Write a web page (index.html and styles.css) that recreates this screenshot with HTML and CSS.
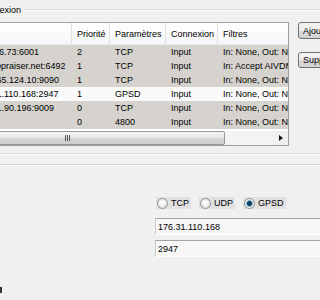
FILE: index.html
```html
<!DOCTYPE html>
<html lang="fr">
<head>
    <meta charset="UTF-8">
    <title>Connexions</title>
    <link rel="stylesheet" href="styles.css">
</head>
<body>
    <div class="group conn">
        <div class="group-title"><span>Connexion</span><span class="line"></span></div>
        <div class="group-body">
            <div class="list">
                <div class="list-view">
                    <table class="grid">
                        <colgroup>
                            <col class="c-name">
                            <col class="c-prio">
                            <col class="c-param">
                            <col class="c-conn">
                            <col class="c-filter">
                        </colgroup>
                        <thead>
                            <tr><th>Nom</th><th>Priorité</th><th>Paramètres</th><th>Connexion</th><th>Filtres</th></tr>
                        </thead>
                        <tbody>
                            <tr class="off"><td>5.39.46.73:6001</td><td>2</td><td>TCP</td><td>Input</td><td>In: None, Out: None</td></tr>
                            <tr class="off"><td>gps.appraiser.net:6492</td><td>1</td><td>TCP</td><td>Input</td><td>In: Accept AIVDM, Out: None</td></tr>
                            <tr class="off"><td>188.165.124.10:9090</td><td>1</td><td>TCP</td><td>Input</td><td>In: None, Out: None</td></tr>
                            <tr class="on"><td>176.31.110.168:2947</td><td>1</td><td>GPSD</td><td>Input</td><td>In: None, Out: None</td></tr>
                            <tr class="off"><td>91.121.90.196:9009</td><td>0</td><td>TCP</td><td>Input</td><td>In: None, Out: None</td></tr>
                            <tr class="off"><td>COM1</td><td>0</td><td>4800</td><td>Input</td><td>In: None, Out: None</td></tr>
                        </tbody>
                    </table>
                </div>
                <div class="hscroll">
                    <div class="sb-btn"></div>
                    <div class="sb-thumb"><span class="grip"></span></div>
                    <div class="sb-track"></div>
                    <div class="sb-btn"><span class="arrow-right"></span></div>
                </div>
            </div>
            <div class="buttons">
                <button type="button" class="btn">Ajouter</button>
                <button type="button" class="btn btn-del">Supprimer</button>
            </div>
        </div>
    </div>

    <div class="group params">
        <div class="form">
            <div class="radios">
                <label class="radio"><input type="radio" name="kind"> TCP</label>
                <label class="radio"><input type="radio" name="kind"> UDP</label>
                <label class="radio"><input type="radio" name="kind" checked> GPSD</label>
            </div>
            <input type="text" class="field" value="176.31.110.168">
            <input type="text" class="field" value="2947">
        </div>
        <div class="mark"></div>
    </div>
</body>
</html>
```

FILE: styles.css
```css
html, body {
    overflow: hidden;
}

body {
    margin: 0;
    width: 320px;
    height: 300px;
    background: #f0f0f0;
    font-family: "Liberation Sans", Arial, sans-serif;
    font-size: 9px;
    color: #000;
}

/* group boxes */
.conn {
    margin-left: -32px;
    width: 420px;
    padding-bottom: 7px;
    border-bottom: 1px solid #d5d5d5;
    box-shadow: 0 1px 0 #fff;
}

.group-title {
    display: flex;
    align-items: center;
    gap: 4px;
    height: 12px;
    margin-top: 4px;
    padding-left: 10px;
    line-height: 12px;
}

.group-title .line {
    flex: 1;
    border-top: 1px solid #d5d5d5;
    border-bottom: 1px solid #fff;
}

.group-body {
    display: flex;
    align-items: flex-start;
    margin-top: 6px;
}

/* list view */
.list {
    width: 321px;
    flex: none;
    box-sizing: border-box;
    border: 1px solid #a0a0a0;
    background: #fff;
}

.list-view {
    height: 107px;
    overflow: hidden;
}

.grid {
    table-layout: fixed;
    width: 400px;
    border-collapse: separate;
    border-spacing: 0;
}

.c-name { width: 103px; }
.c-prio { width: 38px; }
.c-param { width: 56px; }
.c-conn { width: 52px; }
.c-filter { width: 151px; }

.grid th {
    height: 21px;
    padding: 0 5px;
    text-align: left;
    font-weight: normal;
    white-space: nowrap;
    background: linear-gradient(#ffffff, #f6f7f9);
    border-bottom: 1px solid #eaeaea;
    box-shadow: inset -1px 0 0 #e2e2e2;
}

.grid td {
    height: 14px;
    padding: 0 5px;
    line-height: 14px;
    white-space: nowrap;
    overflow: hidden;
}

.grid tr.off td {
    background: #d6d3ce;
}

.grid tr.on td {
    background: #fafafa;
}

/* horizontal scrollbar */
.hscroll {
    display: flex;
    height: 15px;
    background: #f0f0f0;
    border-top: 1px solid #fff;
    box-sizing: border-box;
}

.sb-btn {
    width: 15px;
    display: flex;
    align-items: center;
    justify-content: center;
}

.sb-thumb {
    width: 241px;
    box-sizing: border-box;
    display: flex;
    align-items: center;
    border: 1px solid #979797;
    border-radius: 2px;
    background: linear-gradient(#f5f5f5, #e6e6e6 50%, #d4d4d4 51%, #cfcfcf);
}

.grip {
    margin-left: 80px;
    width: 5px;
    height: 6px;
    background: repeating-linear-gradient(90deg, #555 0 1px, transparent 1px 2px);
}

.sb-track {
    flex: 1;
    background: #f3f3f3;
}

.arrow-right {
    width: 0;
    height: 0;
    border-top: 3px solid transparent;
    border-bottom: 3px solid transparent;
    border-left: 4px solid #111;
}

/* side buttons */
.buttons {
    display: flex;
    flex-direction: column;
    align-items: flex-start;
    margin-left: 9px;
}

.btn {
    height: 17px;
    padding: 0 4px;
    font-family: inherit;
    font-size: 9px;
    color: #000;
    border: 1px solid #707070;
    border-radius: 3px;
    background: linear-gradient(#f4f4f4, #ececec 50%, #dcdcdc 51%, #d2d2d2);
}

.btn-del {
    height: 16px;
    margin-top: 13px;
}

/* second group */
.params {
    margin-top: 10px;
    border-top: 1px solid #d5d5d5;
    box-shadow: inset 0 1px 0 #fff;
}

.form {
    display: flex;
    flex-direction: column;
    align-items: flex-start;
    gap: 5px;
    padding: 32px 0 0 155px;
}

.radios {
    display: flex;
    gap: 8px;
    height: 12px;
    margin: 0 0 4px 1px;
}

.radio {
    display: inline-flex;
    align-items: center;
    gap: 3px;
    padding: 0 2px 0 1px;
    background: #e1e1e1;
}

.radio input {
    appearance: none;
    -webkit-appearance: none;
    margin: 0;
    width: 11px;
    height: 11px;
    border: 1px solid #8f8f8f;
    border-radius: 50%;
    box-sizing: border-box;
    background: radial-gradient(circle at 50% 40%, #ffffff, #e8e8e8 60%, #d6d6d6);
}

.radio input:checked {
    background: radial-gradient(circle, #0e3f5c 0 2px, #2f7fa7 2.6px, #d9e6ee 3.4px, #f2f2f2 4.5px);
}

.field {
    width: 200px;
    height: 17px;
    box-sizing: border-box;
    margin: 0;
    padding: 0 2px;
    font-family: inherit;
    font-size: 9px;
    color: #000;
    background: #f6f6f6;
    border: 1px solid;
    border-color: #a5a5a5 #e3e3e3 #fdfdfd #cdcdcd;
    outline: none;
}

.mark {
    width: 2px;
    height: 6px;
    margin-top: 30px;
    background: #333;
}
```
